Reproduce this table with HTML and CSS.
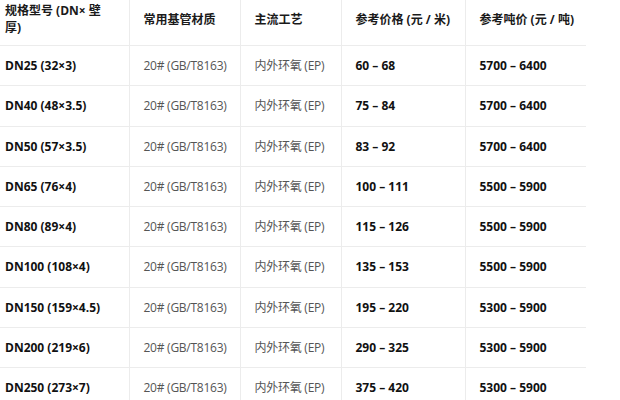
FILE: index.html
```html
<!DOCTYPE html>
<html lang="zh">
<head>
<meta charset="utf-8">
<link rel="stylesheet" href="styles.css">
</head>
<body>
<table class="spec">
  <colgroup>
    <col class="c1"><col class="c2"><col class="c3"><col class="c4"><col class="c5">
  </colgroup>
  <thead>
    <tr>
      <th>规格型号 (DN× 壁厚)</th>
      <th>常用基管材质</th>
      <th>主流工艺</th>
      <th>参考价格 (元 / 米)</th>
      <th>参考吨价 (元 / 吨)</th>
    </tr>
  </thead>
  <tbody>
    <tr><td class="b">DN25 (32×3)</td><td>20# (GB/T8163)</td><td>内外环氧 (EP)</td><td class="b">60 – 68</td><td class="b">5700 – 6400</td></tr>
    <tr><td class="b">DN40 (48×3.5)</td><td>20# (GB/T8163)</td><td>内外环氧 (EP)</td><td class="b">75 – 84</td><td class="b">5700 – 6400</td></tr>
    <tr><td class="b">DN50 (57×3.5)</td><td>20# (GB/T8163)</td><td>内外环氧 (EP)</td><td class="b">83 – 92</td><td class="b">5700 – 6400</td></tr>
    <tr><td class="b">DN65 (76×4)</td><td>20# (GB/T8163)</td><td>内外环氧 (EP)</td><td class="b">100 – 111</td><td class="b">5500 – 5900</td></tr>
    <tr><td class="b">DN80 (89×4)</td><td>20# (GB/T8163)</td><td>内外环氧 (EP)</td><td class="b">115 – 126</td><td class="b">5500 – 5900</td></tr>
    <tr><td class="b">DN100 (108×4)</td><td>20# (GB/T8163)</td><td>内外环氧 (EP)</td><td class="b">135 – 153</td><td class="b">5500 – 5900</td></tr>
    <tr><td class="b">DN150 (159×4.5)</td><td>20# (GB/T8163)</td><td>内外环氧 (EP)</td><td class="b">195 – 220</td><td class="b">5300 – 5900</td></tr>
    <tr><td class="b">DN200 (219×6)</td><td>20# (GB/T8163)</td><td>内外环氧 (EP)</td><td class="b">290 – 325</td><td class="b">5300 – 5900</td></tr>
    <tr><td class="b">DN250 (273×7)</td><td>20# (GB/T8163)</td><td>内外环氧 (EP)</td><td class="b">375 – 420</td><td class="b">5300 – 5900</td></tr>
  </tbody>
</table>
</body>
</html>
```

FILE: styles.css
```css
html, body {
  margin: 0;
  padding: 0;
  background: #fff;
}
body {
  font-family: "Open Sans", "Noto Sans CJK SC", sans-serif;
  font-size: 12px;
  color: #555;
  overflow: hidden;
}
.spec {
  border-collapse: collapse;
  table-layout: fixed;
  width: 586px;
}
.c1 { width: 129px; }
.c2 { width: 111px; }
.c3 { width: 101px; }
.c4 { width: 124px; }
.c5 { width: 121px; }

.spec th,
.spec td {
  text-align: left;
  vertical-align: middle;
  border-bottom: 1px solid #ececec;
  border-left: 1px solid #ececec;
}
.spec th:first-child,
.spec td:first-child {
  border-left: none;
  padding-left: 5px;
}
.spec th {
  color: #1a1a1a;
  font-weight: 700;
  line-height: 17px;
  padding: 2px 4px 9px 14px;
  white-space: nowrap;
}
.spec th:first-child {
  white-space: normal;
  padding-right: 14px;
}
.spec td {
  line-height: 19.25px;
  padding: 10px 4px 10px 14px;
  white-space: nowrap;
  letter-spacing: -0.25px;
}
.spec td.b {
  color: #111;
  font-weight: 700;
  letter-spacing: 0;
}
```
